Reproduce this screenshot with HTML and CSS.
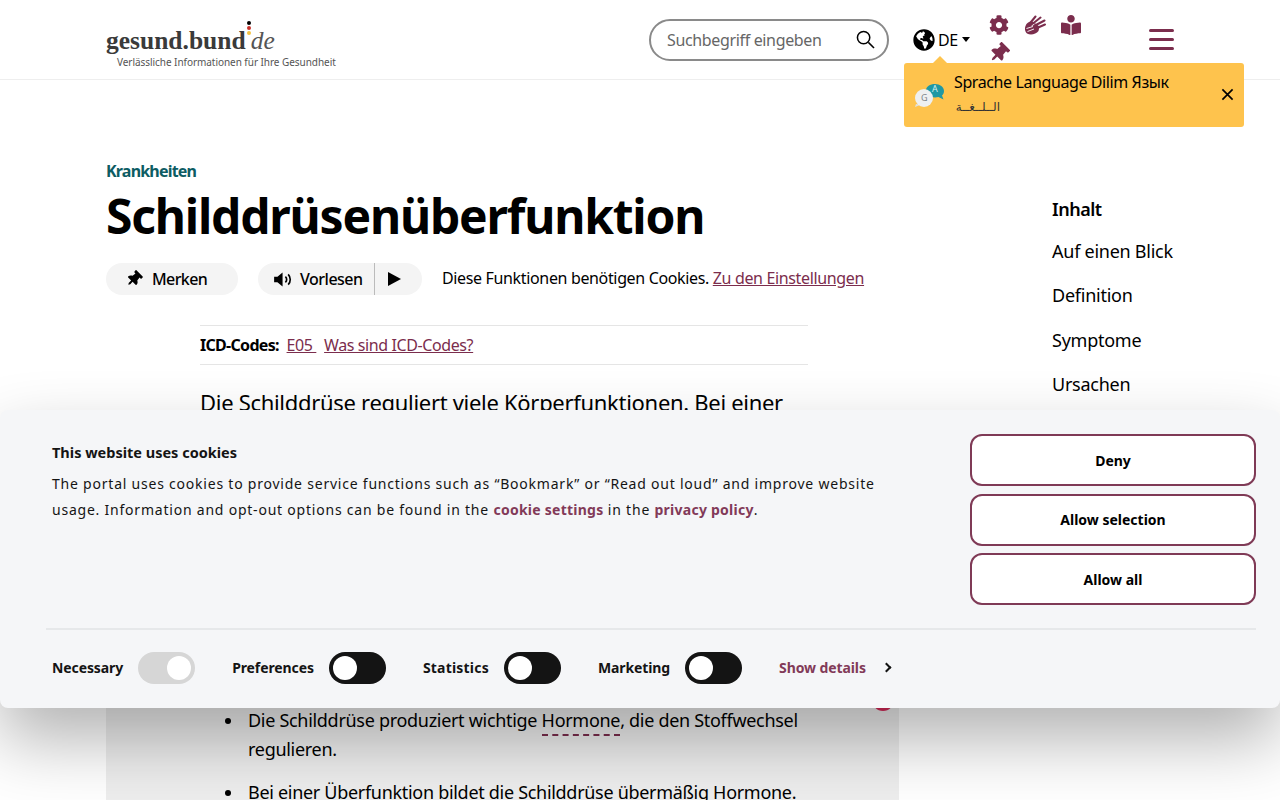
FILE: index.html
```html
<!DOCTYPE html>
<html lang="de">
<head>
  <meta charset="UTF-8">
  <meta name="viewport" content="width=device-width, initial-scale=1.0">
  <title>Schilddrüsenüberfunktion</title>
  <link rel="stylesheet" href="styles.css">
</head>
<body>
  <header class="header">
    <a class="logo" href="#">
      <span class="logo-name">gesund.bund<span class="logo-dots"><i class="dot-black"></i><i class="dot-red"></i><i class="dot-gold"></i></span><em>de</em></span>
      <span class="logo-claim">Verlässliche Informationen für Ihre Gesundheit</span>
    </a>
    <div class="search">
      <span>Suchbegriff eingeben</span>
      <svg class="search-icon" viewBox="0 0 20 20"><circle cx="8" cy="8" r="6.5"/><path d="M13 13l6 6"/></svg>
    </div>
    <div class="lang">
      <svg class="globe" viewBox="0 0 496 512"><path d="M248 8C111.030 8 0 119.030 0 256s111.030 248 248 248 248-111.030 248-248S384.970 8 248 8zm82.290 357.600c-3.900 3.880-7.990 7.950-11.310 11.280-2.990 3-5.100 6.700-6.170 10.710-1.510 5.660-2.730 11.380-4.770 16.870l-17.390 46.850c-13.760 3-28 4.690-42.650 4.690v-27.380c1.690-12.620-7.640-36.260-22.630-51.250-6-6-9.370-14.140-9.370-22.630v-32.010c0-11.640-6.270-22.340-16.460-27.970-14.370-7.950-34.810-19.060-48.810-26.110-11.480-5.780-22.100-13.140-31.650-21.750l-.8-.72a114.792 114.792 0 0 1-18.060-20.740c-9.380-13.770-24.660-36.420-34.590-51.140 20.470-45.500 57.360-82.040 103.200-101.890l24.010 12.010C203.480 89.740 216 82.010 216 70.110v-11.300c7.990-1.290 16.120-2.110 24.450-2.410l28.300 28.300c6.250 6.250 6.250 16.380 0 22.630L264 112l-10.340 10.340c-3.120 3.120-3.120 8.190 0 11.310l4.690 4.690c3.120 3.120 3.120 8.190 0 11.310l-8 8a8.008 8.008 0 0 1-5.670 2.340h-8.990c-2.080 0-4.080.81-5.580 2.270l-9.920 9.650a8.008 8.008 0 0 0-1.580 9.310l15.590 31.190c2.660 5.320-1.210 11.580-7.150 11.580h-5.640c-1.930 0-3.790-.7-5.240-1.960l-9.280-8.060a16.017 16.017 0 0 0-15.550-3.100l-31.170 10.390a11.950 11.950 0 0 0-8.170 11.340c0 4.530 2.560 8.660 6.610 10.690l11.080 5.540c9.410 4.710 19.790 7.160 30.310 7.160s22.590 27.290 32 32h66.750c8.490 0 16.620 3.370 22.630 9.370l13.690 13.690a30.503 30.503 0 0 1 8.930 21.570 46.536 46.536 0 0 1-13.720 32.980zM417 274.250c-5.790-1.450-10.840-5-14.150-9.970l-17.980-26.970a23.970 23.970 0 0 1 0-26.620l19.590-29.380c2.320-3.470 5.500-6.290 9.240-8.150l12.980-6.490C440.200 193.590 448 223.870 448 256c0 8.670-.74 17.160-1.820 25.540L417 274.250z"/></svg>
      <span class="lang-code">DE</span>
      <span class="caret"></span>
    </div>
    <div class="tools">
      <svg class="tool" viewBox="0 0 512 512"><path d="M487.400 315.700l-42.600-24.600c4.300-23.200 4.300-47 0-70.200l42.600-24.600c4.900-2.800 7.100-8.600 5.500-14-11.100-35.600-30-67.800-54.700-94.600-3.800-4.100-10-5.100-14.800-2.300L380.800 110c-17.900-15.400-38.500-27.300-60.800-35.100V25.800c0-5.600-3.900-10.500-9.400-11.700-36.700-8.200-74.300-7.800-109.200 0-5.500 1.200-9.400 6.100-9.400 11.700V75c-22.200 7.900-42.800 19.800-60.800 35.100L88.700 85.500c-4.900-2.800-11-1.900-14.800 2.300-24.700 26.700-43.600 58.900-54.700 94.600-1.700 5.400.6 11.200 5.500 14L67.300 221c-4.300 23.200-4.300 47 0 70.200l-42.600 24.600c-4.900 2.800-7.100 8.600-5.500 14 11.100 35.600 30 67.800 54.700 94.600 3.800 4.100 10 5.100 14.800 2.300l42.600-24.600c17.900 15.400 38.500 27.300 60.800 35.100v49.200c0 5.600 3.900 10.500 9.400 11.700 36.700 8.200 74.300 7.800 109.200 0 5.500-1.200 9.400-6.100 9.400-11.700v-49.200c22.200-7.900 42.800-19.800 60.800-35.100l42.600 24.600c4.900 2.800 11 1.900 14.800-2.300 24.700-26.700 43.600-58.900 54.700-94.600 1.500-5.500-.7-11.300-5.600-14.100zM256 336c-44.100 0-80-35.900-80-80s35.900-80 80-80 80 35.900 80 80-35.900 80-80 80z"/></svg>
      <svg class="tool tool-hands" viewBox="0 0 22 20">
        <path d="M1.500 11C3 7 7 5.500 10 7.500l5.500 4-1 4.500C12 19 7 20.500 3 18.500 .8 16.500.5 13.500 1.500 11z"/>
        <path class="hand-fingers" d="M7 7l4.500-5.500M9 8.500l7.500-6M11 10.500l9.500-5M13 13l8-3.500"/>
        <path class="hand-gaps" d="M2.500 13.500l6.500-2M3.500 16.500l6.500-2.500M10.500 9l-3 2"/>
      </svg>
      <svg class="tool" viewBox="0 0 512 512"><path d="M352 96c0-53.020-42.980-96-96-96s-96 42.980-96 96 42.980 96 96 96 96-42.980 96-96zM233.590 241.100c-59.330-36.320-155.430-46.300-203.790-49.050C13.550 191.130 0 203.510 0 219.140v222.800c0 14.330 11.590 26.280 26.490 27.050 43.660 2.290 131.990 10.680 193.040 41.430 9.370 4.720 20.480-1.710 20.480-11.870V252.560c-.01-4.670-2.320-8.950-6.420-11.460zm248.610-49.050c-48.350 2.740-144.460 12.730-203.780 49.050-4.100 2.510-6.410 6.960-6.410 11.630v245.790c0 10.190 11.140 16.630 20.540 11.900 61.040-30.720 149.320-39.110 192.970-41.400 14.900-.78 26.490-12.730 26.490-27.060V219.140c-.01-15.630-13.560-28.010-29.810-27.090z"/></svg>
      <svg class="tool pin" viewBox="0 0 384 512"><path d="M298.028 214.267L285.793 96H328c13.255 0 24-10.745 24-24V24c0-13.255-10.745-24-24-24H56C42.745 0 32 10.745 32 24v48c0 13.255 10.745 24 24 24h42.207L85.972 214.267C37.465 236.820 0 277.261 0 328c0 13.255 10.745 24 24 24h136v104.007c0 1.242.289 2.467.845 3.578l24 48c2.941 5.882 11.364 5.893 14.311 0l24-48a8.008 8.008 0 0 0 .845-3.578V352h136c13.255 0 24-10.745 24-24-.001-51.183-37.983-91.420-85.973-113.733z"/></svg>
    </div>
    <div class="burger"><i></i><i></i><i></i></div>

    <div class="lang-tip">
      <svg class="bubbles" viewBox="0 0 32 26">
        <path fill="#1f98a3" d="M21 2c5 0 9 3 9 7 0 2-1 3.500-2 4.500l1.500 4-5-2.500c-1 .3-2.400.5-3.500.5-5 0-9-3-9-7s4-6.500 9-6.500z"/>
        <text class="bubble-letter" x="18" y="10" fill="#d6f0f2">A</text>
        <path fill="#dfe2e4" d="M2 22l-1 3 5-2c-3-1-4-1-4-1z"/>
        <circle cx="10" cy="16" r="9" fill="#eef0f1"/>
        <text class="bubble-letter" x="7" y="19" fill="#7c8488">G</text>
      </svg>
      <div class="lang-tip-text">
        <div>Sprache Language Dilim Язык</div>
        <div class="lang-tip-ar" dir="rtl" lang="ar">الــلــغــة</div>
      </div>
      <svg class="close" viewBox="0 0 14 14"><path d="M1.500 1.500l11 11M12.500 1.500l-11 11"/></svg>
    </div>
  </header>

  <main class="page">
    <div class="article">
      <div class="kicker">Krankheiten</div>
      <h1>Schilddrüsenüberfunktion</h1>
      <div class="actions">
        <button class="pill pill-save">
          <svg class="pin-small" viewBox="0 0 384 512"><path d="M298.028 214.267L285.793 96H328c13.255 0 24-10.745 24-24V24c0-13.255-10.745-24-24-24H56C42.745 0 32 10.745 32 24v48c0 13.255 10.745 24 24 24h42.207L85.972 214.267C37.465 236.820 0 277.261 0 328c0 13.255 10.745 24 24 24h136v104.007c0 1.242.289 2.467.845 3.578l24 48c2.941 5.882 11.364 5.893 14.311 0l24-48a8.008 8.008 0 0 0 .845-3.578V352h136c13.255 0 24-10.745 24-24-.001-51.183-37.983-91.420-85.973-113.733z"/></svg>
          Merken
        </button>
        <div class="pill pill-read">
          <span class="read-label">
            <svg class="speaker" viewBox="0 0 20 16"><path d="M0 5h3.500L9 .5v15L3.500 11H0z"/><path class="waves" d="M12 5a4 4 0 0 1 0 6M15 2.500a8 8 0 0 1 0 11"/></svg>
            Vorlesen
          </span>
          <span class="read-play"><span class="play"></span></span>
        </div>
        <span class="actions-note">Diese Funktionen benötigen Cookies. <a href="#">Zu den Einstellungen</a></span>
      </div>
      <div class="body-col">
        <div class="icd"><b>ICD-Codes:</b> <a href="#">E05&nbsp;</a> <a href="#">Was sind ICD-Codes?</a></div>
        <p class="intro">Die Schilddrüse reguliert viele Körperfunktionen. Bei einer</p>
      </div>
      <section class="summary">
        <span class="summary-badge"></span>
        <ul>
          <li>Die Schilddrüse produziert wichtige <span class="term">Hormone</span>, die den Stoffwechsel regulieren.</li>
          <li>Bei einer Überfunktion bildet die Schilddrüse übermäßig Hormone.</li>
        </ul>
      </section>
    </div>
    <nav class="toc">
      <div class="toc-title">Inhalt</div>
      <a href="#">Auf einen Blick</a>
      <a href="#">Definition</a>
      <a href="#">Symptome</a>
      <a href="#">Ursachen</a>
    </nav>
  </main>

  <div class="cookie">
    <div class="cookie-top">
      <div class="cookie-text">
        <div class="cookie-title">This website uses cookies</div>
        <p>The portal uses cookies to provide service functions such as “Bookmark” or “Read out loud” and improve website usage. Information and opt-out options can be found in the <a href="#">cookie settings</a> in the <a href="#">privacy policy</a>.</p>
      </div>
      <div class="cookie-buttons">
        <button>Deny</button>
        <button>Allow selection</button>
        <button>Allow all</button>
      </div>
    </div>
    <div class="cookie-bottom">
      <div class="consent"><span>Necessary</span><span class="switch switch-on"></span></div>
      <div class="consent"><span>Preferences</span><span class="switch"></span></div>
      <div class="consent consent-wide"><span>Statistics</span><span class="switch"></span></div>
      <div class="consent"><span>Marketing</span><span class="switch"></span></div>
      <div class="details"><span>Show details</span><i class="chevron"></i></div>
    </div>
  </div>
</body>
</html>
```
FILE: styles.css
```css
* {
  box-sizing: border-box;
}

html,
body {
  height: 800px;
  margin: 0;
  overflow: hidden;
}

body {
  font-family: "Noto Sans", Arial, sans-serif;
  font-size: 18px;
  color: #000;
  background-color: #fff;
}

a {
  color: #7b2d4d;
}

/* header */
.header {
  position: relative;
  display: flex;
  align-items: center;
  height: 80px;
  padding-left: 106px;
  border-bottom: 1px solid #eee;
}

.logo {
  display: block;
  width: 543px;
  padding-top: 17px;
  text-decoration: none;
}

.logo-name {
  display: block;
  font-family: "Liberation Serif", serif;
  font-size: 25.500px;
  line-height: 28px;
  font-weight: bold;
  color: #3a3a3a;
}

.logo-name em {
  font-weight: normal;
  color: #555;
}

.logo-dots {
  display: inline-flex;
  flex-direction: column;
  gap: 1px;
  width: 4px;
  margin-left: 1px;
  vertical-align: 8px;
  transform: translateY(-16px);
}

.logo-dots i {
  width: 4px;
  height: 4px;
  border-radius: 50%;
}

.dot-black {
  background-color: #000;
}

.dot-red {
  background-color: #c8312b;
}

.dot-gold {
  background-color: #f5c342;
}

.logo-claim {
  display: block;
  margin: 0 0 0 11px;
  font-size: 10px;
  line-height: 14px;
  letter-spacing: -0.05px;
  color: #555;
}

.search {
  display: flex;
  align-items: center;
  justify-content: space-between;
  width: 240px;
  height: 42px;
  padding: 0 12px 0 16px;
  border: 2px solid #8a8a8a;
  border-radius: 21px;
  font-size: 16px;
  letter-spacing: -0.35px;
  color: #666;
}

.search-icon {
  width: 19px;
  height: 19px;
  fill: none;
  stroke: #000;
  stroke-width: 1.600;
}

.lang {
  display: flex;
  align-items: center;
  width: 76px;
  margin-left: 24px;
}

.globe {
  width: 22px;
  height: 22px;
}

.lang-code {
  margin-left: 3px;
  font-size: 16px;
  letter-spacing: -0.5px;
}

.caret {
  width: 0;
  height: 0;
  margin-left: 4px;
  border-left: 4px solid transparent;
  border-right: 4px solid transparent;
  border-top: 5px solid #000;
}

.tools {
  display: flex;
  flex-wrap: wrap;
  align-self: flex-start;
  gap: 8px 15px;
  width: 110px;
  padding-top: 15px;
}

.tool {
  width: 20px;
  height: 20px;
  fill: #7b2d4d;
}

.tool-hands {
  width: 22px;
}

.hand-fingers {
  fill: none;
  stroke: #7b2d4d;
  stroke-width: 2;
  stroke-linecap: round;
}

.hand-gaps {
  fill: none;
  stroke: #fff;
  stroke-width: 0.900;
}

.pin {
  transform: rotate(45deg);
}

.burger {
  display: flex;
  flex-direction: column;
  gap: 6px;
  width: 25px;
  margin-left: 50px;
}

.burger i {
  display: block;
  height: 3px;
  border-radius: 2px;
  background-color: #7b2d4d;
}

.lang-tip {
  position: absolute;
  top: 63px;
  left: 904px;
  z-index: 5;
  display: flex;
  width: 340px;
  height: 64px;
  padding: 8px 10px;
  border-radius: 3px;
  background-color: #fec34d;
  font-size: 16px;
  letter-spacing: -0.4px;
}

.lang-tip::before {
  content: "";
  position: absolute;
  top: -7px;
  left: 29px;
  border-left: 7px solid transparent;
  border-right: 7px solid transparent;
  border-bottom: 7px solid #fec34d;
}

.bubbles {
  width: 32px;
  height: 26px;
  margin-top: 11px;
}

.bubble-letter {
  font-size: 9px;
  letter-spacing: 0;
}

.lang-tip-text {
  margin-left: 8px;
  line-height: 22px;
}

.lang-tip-ar {
  width: 46px;
  margin-top: 3px;
  font-family: "DejaVu Sans", sans-serif;
  font-size: 12px;
  text-align: right;
  color: #333;
}

.close {
  position: absolute;
  top: 25px;
  right: 10px;
  width: 13px;
  height: 13px;
  fill: none;
  stroke: #000;
  stroke-width: 1.800;
}

/* article */
.page {
  display: flex;
  padding: 80px 0 0 106px;
}

.article {
  width: 793px;
}

.kicker {
  font-size: 16px;
  line-height: 22px;
  font-weight: 700;
  letter-spacing: -0.8px;
  color: #0d5c63;
}

h1 {
  margin: 0;
  padding-top: 2px;
  font-size: 48px;
  line-height: 64px;
  font-weight: 700;
  letter-spacing: -1.200px;
}

.actions {
  display: flex;
  align-items: center;
  margin-top: 15px;
}

.pill {
  display: flex;
  align-items: center;
  height: 32px;
  border: none;
  border-radius: 16px;
  background-color: #f4f4f4;
  font-family: inherit;
  font-size: 16px;
  font-weight: 500;
  letter-spacing: -0.5px;
  color: #000;
}

.pill-save {
  gap: 12px;
  width: 132px;
  padding: 0 0 0 22px;
  letter-spacing: -0.6px;
}

.pin-small {
  width: 12px;
  height: 16px;
  transform: rotate(45deg);
}

.pill-read {
  width: 164px;
  margin-left: 20px;
}

.read-label {
  display: flex;
  align-items: center;
  gap: 7px;
  width: 117px;
  height: 32px;
  padding-left: 16px;
  border-right: 1px solid #bbb;
}

.speaker {
  width: 19px;
  height: 15px;
}

.waves {
  fill: none;
  stroke: #000;
  stroke-width: 1.800;
}

.read-play {
  padding-left: 13px;
}

.play {
  display: block;
  width: 0;
  height: 0;
  border-left: 13px solid #000;
  border-top: 7px solid transparent;
  border-bottom: 7px solid transparent;
}

.actions-note {
  margin-left: 20px;
  padding-bottom: 2px;
  font-size: 16px;
  letter-spacing: -0.35px;
}

.body-col {
  width: 608px;
  margin: 30px 0 0 94px;
}

.icd {
  height: 40px;
  border-top: 1px solid #e5e5e5;
  border-bottom: 1px solid #e5e5e5;
  font-size: 16px;
  line-height: 38px;
  letter-spacing: -0.4px;
}

.icd b {
  letter-spacing: -0.7px;
}

.icd a {
  margin-left: 4px;
}

.intro {
  margin: 20px 0 0;
  font-size: 22px;
  line-height: 34px;
  letter-spacing: -0.3px;
}

.summary {
  position: relative;
  height: 371px;
  margin-top: 10px;
  padding: 277px 89px 0 142px;
  overflow: hidden;
  background-color: #eeeeee;
}

.summary-badge {
  position: absolute;
  top: 260px;
  right: 5px;
  width: 22px;
  height: 22px;
  border-radius: 50%;
  background-color: #d92a5a;
}

.summary ul {
  margin: 0;
  padding: 0;
  list-style: none;
}

.summary li {
  position: relative;
  margin-bottom: 14px;
  font-size: 18px;
  line-height: 29px;
  letter-spacing: -0.3px;
}

.summary li::before {
  content: "";
  position: absolute;
  top: 12px;
  left: -23px;
  width: 6px;
  height: 6px;
  border-radius: 50%;
  background-color: #000;
}

.term {
  padding-bottom: 2px;
  border-bottom: 2px dashed #7b2d4d;
}

.toc {
  display: flex;
  flex-direction: column;
  gap: 20px;
  margin: 38px 0 0 153px;
}

.toc a {
  color: #000;
  font-size: 18px;
  line-height: 24.400px;
  letter-spacing: -0.25px;
  text-decoration: none;
}

.toc-title {
  margin-bottom: -1px;
  font-weight: 600;
  line-height: 22px;
  letter-spacing: -0.5px;
}

/* cookie banner */
.cookie {
  position: absolute;
  top: 410px;
  left: 0;
  z-index: 10;
  width: 1280px;
  height: 298px;
  padding: 24px 24px 0 46px;
  border-radius: 8px;
  background-color: #f5f6f8;
  box-shadow: 0 32px 68px rgba(0, 0, 0, 0.3);
  color: #141414;
}

.cookie-top {
  display: flex;
  justify-content: space-between;
  height: 194px;
}

.cookie-text {
  width: 840px;
  padding: 8px 0 0 6px;
}

.cookie-title {
  font-size: 14.500px;
  line-height: 20px;
  font-weight: 700;
}

.cookie-text p {
  margin: 9px 0 0;
  font-size: 14px;
  line-height: 26px;
  letter-spacing: 0.780px;
}

.cookie-text a {
  font-weight: 700;
  letter-spacing: 0.250px;
  text-decoration: none;
  color: #823a58;
}

.cookie-buttons {
  display: flex;
  flex-direction: column;
  gap: 7.500px;
  width: 286px;
}

.cookie-buttons button {
  height: 52px;
  border: 2px solid #7f3a56;
  border-radius: 12px;
  background-color: #fff;
  font-family: inherit;
  font-size: 14px;
  font-weight: 700;
  color: #000;
}

.cookie-bottom {
  display: flex;
  align-items: center;
  height: 77px;
  padding-left: 6px;
  border-top: 2px solid #e6e8ea;
  font-size: 14px;
  font-weight: 700;
  letter-spacing: -0.1px;
}

.consent {
  display: flex;
  align-items: center;
  gap: 15px;
  margin-right: 37px;
}

.consent-wide {
  letter-spacing: 0.2px;
}

.switch {
  position: relative;
  width: 57px;
  height: 32px;
  border-radius: 16px;
  background-color: #141414;
}

.switch::after {
  content: "";
  position: absolute;
  top: 4px;
  left: 4px;
  width: 24px;
  height: 24px;
  border-radius: 50%;
  background-color: #fff;
}

.switch-on {
  background-color: #d6d6d6;
}

.switch-on::after {
  left: 29px;
}

.details {
  display: flex;
  align-items: center;
  gap: 17px;
  color: #823a58;
}

.chevron {
  width: 7px;
  height: 7px;
  border-top: 2px solid #141414;
  border-right: 2px solid #141414;
  transform: rotate(45deg);
}
```
